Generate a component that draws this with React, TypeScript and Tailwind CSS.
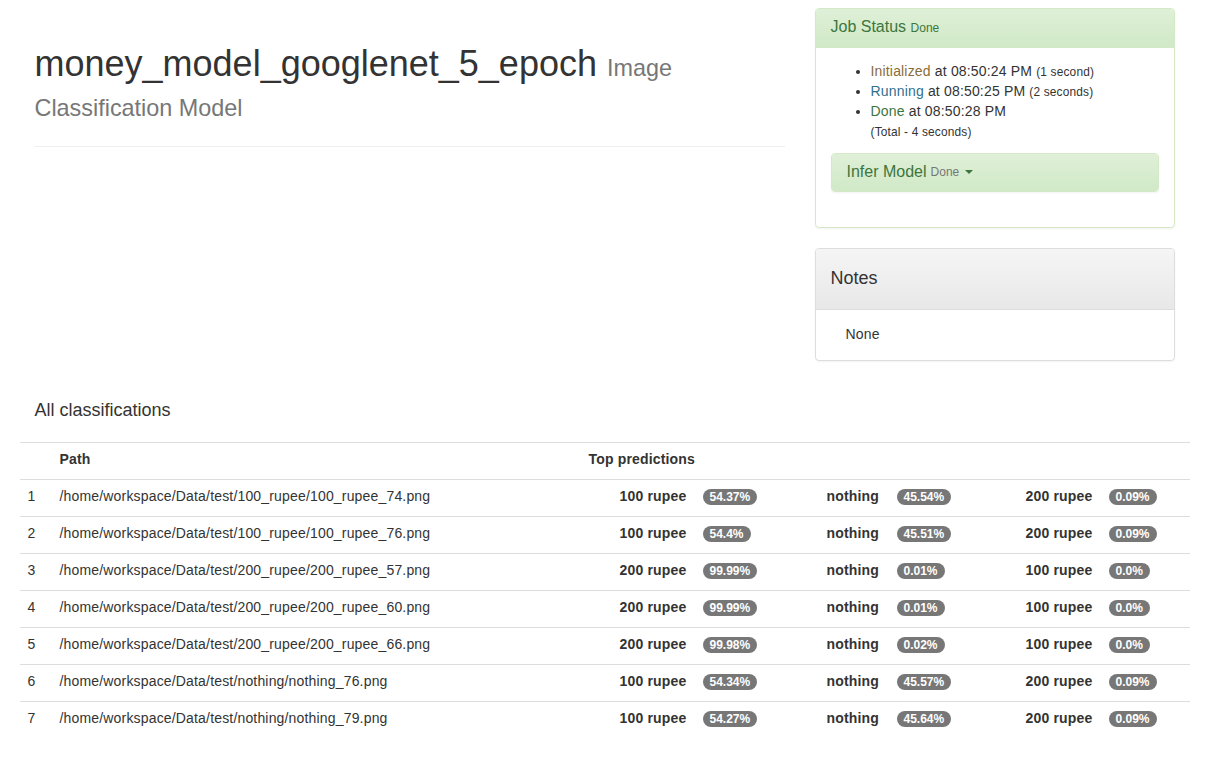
import React from "react";

type Pred = [string, string];
const rows: [string, Pred[]][] = [
  ["/home/workspace/Data/test/100_rupee/100_rupee_74.png", [["100 rupee", "54.37%"], ["nothing", "45.54%"], ["200 rupee", "0.09%"]]],
  ["/home/workspace/Data/test/100_rupee/100_rupee_76.png", [["100 rupee", "54.4%"], ["nothing", "45.51%"], ["200 rupee", "0.09%"]]],
  ["/home/workspace/Data/test/200_rupee/200_rupee_57.png", [["200 rupee", "99.99%"], ["nothing", "0.01%"], ["100 rupee", "0.0%"]]],
  ["/home/workspace/Data/test/200_rupee/200_rupee_60.png", [["200 rupee", "99.99%"], ["nothing", "0.01%"], ["100 rupee", "0.0%"]]],
  ["/home/workspace/Data/test/200_rupee/200_rupee_66.png", [["200 rupee", "99.98%"], ["nothing", "0.02%"], ["100 rupee", "0.0%"]]],
  ["/home/workspace/Data/test/nothing/nothing_76.png", [["100 rupee", "54.34%"], ["nothing", "45.57%"], ["200 rupee", "0.09%"]]],
  ["/home/workspace/Data/test/nothing/nothing_79.png", [["100 rupee", "54.27%"], ["nothing", "45.64%"], ["200 rupee", "0.09%"]]],
];

function Badge({ children }: { children: React.ReactNode }) {
  return (
    <span className="inline-block rounded-[10px] bg-[#777] px-[7px] py-[2px] text-[12px] font-bold leading-[12px] tracking-normal text-white align-middle">
      {children}
    </span>
  );
}

export default function App() {
  return (
    <div className="min-h-screen bg-white text-[14px] leading-[20px] text-[#333]" style={{ fontFamily: '"Liberation Sans", Arial, Helvetica, sans-serif' }}>
      <div className="mx-auto w-[1170px]">
        <div className="flex">
          {/* left column */}
          <div className="w-[780px] px-[15px]">
            <div className="border-b border-[#eee] pb-[23px] pt-[44px]">
              <h1 className="text-[36px] font-normal leading-[1.1] text-[#333]">
                money_model_googlenet_5_epoch{" "}
                <span className="text-[23.4px] text-[#777]">Image Classification Model</span>
              </h1>
            </div>
          </div>
          {/* right column */}
          <div className="w-[390px] px-[15px] pt-[8px]">
            <div className="mb-[20px] rounded-[4px] border border-[#d6e9c6] shadow-[0_1px_2px_rgba(0,0,0,0.05)]">
              <div className="rounded-t-[3px] border-b border-[#d6e9c6] bg-[linear-gradient(to_bottom,#dff0d8_0%,#d0e9c6_100%)] px-[15px] pb-[11px] pt-[9px] text-[16px] leading-[1.1] text-[#3c763d]">
                Job Status <span className="text-[12px]">Done</span>
              </div>
              <div className="px-[15px] pb-[15px] pt-[13px]">
                <ul className="mb-[12px] list-disc pl-[40px] tracking-[0.17px]">
                  <li>
                    <span className="text-[#8a6d3b]">Initialized</span> at 08:50:24 PM{" "}
                    <span className="text-[11.9px] leading-[17px]">(1 second)</span>
                  </li>
                  <li>
                    <span className="text-[#31708f]">Running</span> at 08:50:25 PM{" "}
                    <span className="text-[11.9px] leading-[17px]">(2 seconds)</span>
                  </li>
                  <li>
                    <span className="text-[#3c763d]">Done</span> at 08:50:28 PM
                    <br />
                    <span className="text-[11.9px] leading-[17px]">(Total - 4 seconds)</span>
                  </li>
                </ul>
                <div className="mb-[20px] rounded-[4px] border border-[#d6e9c6] shadow-[0_1px_2px_rgba(0,0,0,0.05)]">
                  <div className="flex items-center rounded-[3px] bg-[linear-gradient(to_bottom,#dff0d8_0%,#d0e9c6_100%)] px-[15px] pb-[11px] pt-[9px] text-[16px] leading-[1.1] text-[#3c763d]">
                    <span>Infer Model</span>
                    <span className="ml-[4px] mt-[2px] text-[12px] text-[#777]">Done</span>
                    <span className="ml-[6px] mt-[1px] inline-block h-0 w-0 border-x-[4px] border-t-[4px] border-x-transparent border-t-[#3c763d]" />
                  </div>
                </div>
              </div>
            </div>
            <div className="mb-[20px] rounded-[4px] border border-[#ddd] shadow-[0_1px_2px_rgba(0,0,0,0.05)]">
              <div className="rounded-t-[3px] border-b border-[#ddd] bg-[linear-gradient(to_bottom,#f5f5f5_0%,#e8e8e8_100%)] px-[15px] py-[10px]">
                <h4 className="my-[10px] text-[18px] font-normal leading-[1.1] text-[#333]">Notes</h4>
              </div>
              <div className="px-[15px] pb-[16px] pt-[14px] tracking-[0.17px]">
                <div className="pl-[15px]">None</div>
              </div>
            </div>
          </div>
        </div>

        <h4 className="mb-[21px] mt-[20px] px-[15px] text-[18px] font-normal leading-[1.1] text-[#333]">All classifications</h4>

        <div className="w-full tracking-[0.17px]">
          <div className="flex border-t border-[#ddd] font-bold">
            <div className="w-[32px] px-[8px] pb-[10px] pt-[6px]"></div>
            <div className="w-[529px] px-[8px] pb-[10px] pt-[6px]">Path</div>
            <div className="flex-1 px-[8px] pb-[10px] pt-[6px]">Top predictions</div>
          </div>
          {rows.map(([path, preds], i) => (
            <div key={i} className="flex border-t border-[#ddd]">
              <div className="w-[32px] px-[8px] pb-[10px] pt-[6px]">{i + 1}</div>
              <div className="w-[529px] px-[8px] pb-[10px] pt-[6px]">{path}</div>
              <div className="flex flex-1 items-center pb-[10px] pl-[39px] pt-[6px]">
                <span className="w-[83px] font-bold">{preds[0][0]}</span>
                <span className="w-[124px]"><Badge>{preds[0][1]}</Badge></span>
                <span className="w-[70px] font-bold">{preds[1][0]}</span>
                <span className="w-[129px]"><Badge>{preds[1][1]}</Badge></span>
                <span className="w-[83px] font-bold">{preds[2][0]}</span>
                <span><Badge>{preds[2][1]}</Badge></span>
              </div>
            </div>
          ))}
        </div>
      </div>
    </div>
  );
}
